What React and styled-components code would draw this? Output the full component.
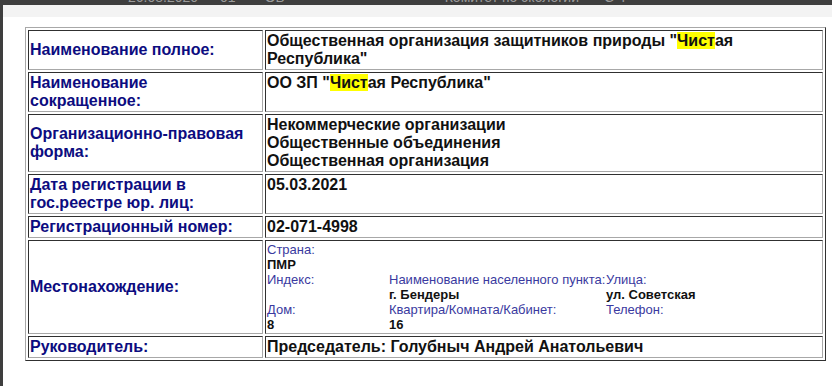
import React from "react";
import styled, { createGlobalStyle } from "styled-components";

const GlobalStyle = createGlobalStyle`
  html, body { margin: 0; padding: 0; background: #3e3e3e; }
  body { font-family: "Liberation Sans", Arial, sans-serif; }
`;

const Page = styled.div`
  width: 832px;
  height: 386px;
  overflow: hidden;
  display: flex;
  flex-direction: column;
  background: #3e3e3e;
`;

const TopStrip = styled.div`
  height: 5px;
  overflow: hidden;
  display: flex;
  color: #9a9a9a;
  font-size: 14px;
  line-height: 14px;
  white-space: nowrap;
`;

const StripText = styled.span`
  margin-top: -10px;
  margin-left: ${(p) => p.$gap}px;
`;

const Body = styled.div`
  flex: 1;
  display: flex;
  padding-left: 3px;
`;

const Panel = styled.div`
  flex: 1;
  display: flex;
  flex-direction: column;
  background: #ffffff;
`;

const PanelHeader = styled.div`
  height: 12px;
  background: #f3f3f3;
`;

const PanelContent = styled.div`
  padding: 10px 6px 0 22px;
`;

const InfoTable = styled.table`
  width: 801px;
  border-collapse: separate;
  border-spacing: 2px;
  border: 1px solid;
  border-color: #a8a8a8 #303030 #303030 #a8a8a8;
  font-size: 16px;
  line-height: 18px;
`;

const Cell = styled.td`
  border: 1px solid;
  border-color: #303030 #a8a8a8 #a8a8a8 #303030;
  padding: 1px;
  vertical-align: top;
`;

const LabelCell = styled(Cell)`
  width: 231px;
  color: #0c0c80;
  font-weight: bold;
  vertical-align: middle;
`;

const ValueCell = styled(Cell)`
  color: #111;
  font-weight: bold;
`;

const Mark = styled.span`
  background: #ffff00;
`;

const AddrGrid = styled.div`
  display: grid;
  grid-template-columns: 122px 217px 1fr;
  line-height: 15px;
`;

const AddrLabel = styled.div`
  grid-column: ${(p) => p.$span || "auto"};
  color: #3a3aa0;
  font-size: 13px;
  font-weight: normal;
  white-space: nowrap;
`;

const AddrValue = styled.div`
  grid-column: ${(p) => p.$span || "auto"};
  color: #111;
  font-size: 13px;
  font-weight: bold;
`;

const rows = [
  {
    label: "Наименование полное:",
    value: (
      <>
        Общественная организация защитников природы "<Mark>Чист</Mark>ая
        Республика"
      </>
    ),
  },
  {
    label: "Наименование сокращенное:",
    value: (
      <>
        ОО ЗП "<Mark>Чист</Mark>ая Республика"
      </>
    ),
  },
  {
    label: "Организационно-правовая форма:",
    value: (
      <>
        Некоммерческие организации
        <br />
        Общественные объединения
        <br />
        Общественная организация
      </>
    ),
  },
  { label: "Дата регистрации в гос.реестре юр. лиц:", value: "05.03.2021" },
  { label: "Регистрационный номер:", value: "02-071-4998" },
];

export default function App() {
  return (
    <>
      <GlobalStyle />
      <Page>
        <TopStrip>
          <StripText $gap={128}>26.08.2020</StripText>
          <StripText $gap={22}>01</StripText>
          <StripText $gap={29}>ОБ</StripText>
          <StripText $gap={155}>"Комитет по экологии"</StripText>
          <StripText $gap={20}>С"Т"</StripText>
        </TopStrip>
        <Body>
          <Panel>
            <PanelHeader />
            <PanelContent>
              <InfoTable>
                <tbody>
                  {rows.map((r) => (
                    <tr key={r.label}>
                      <LabelCell>{r.label}</LabelCell>
                      <ValueCell>{r.value}</ValueCell>
                    </tr>
                  ))}
                  <tr>
                    <LabelCell>Местонахождение:</LabelCell>
                    <ValueCell>
                      <AddrGrid>
                        <AddrLabel $span="1 / -1">Страна:</AddrLabel>
                        <AddrValue $span="1 / -1">ПМР</AddrValue>
                        <AddrLabel>Индекс:</AddrLabel>
                        <AddrLabel>Наименование населенного пункта:</AddrLabel>
                        <AddrLabel>Улица:</AddrLabel>
                        <AddrValue>&nbsp;</AddrValue>
                        <AddrValue>г. Бендеры</AddrValue>
                        <AddrValue>ул. Советская</AddrValue>
                        <AddrLabel>Дом:</AddrLabel>
                        <AddrLabel>Квартира/Комната/Кабинет:</AddrLabel>
                        <AddrLabel>Телефон:</AddrLabel>
                        <AddrValue>8</AddrValue>
                        <AddrValue>16</AddrValue>
                        <AddrValue>&nbsp;</AddrValue>
                      </AddrGrid>
                    </ValueCell>
                  </tr>
                  <tr>
                    <LabelCell>Руководитель:</LabelCell>
                    <ValueCell>Председатель: Голубныч Андрей Анатольевич</ValueCell>
                  </tr>
                </tbody>
              </InfoTable>
            </PanelContent>
          </Panel>
        </Body>
      </Page>
    </>
  );
}
